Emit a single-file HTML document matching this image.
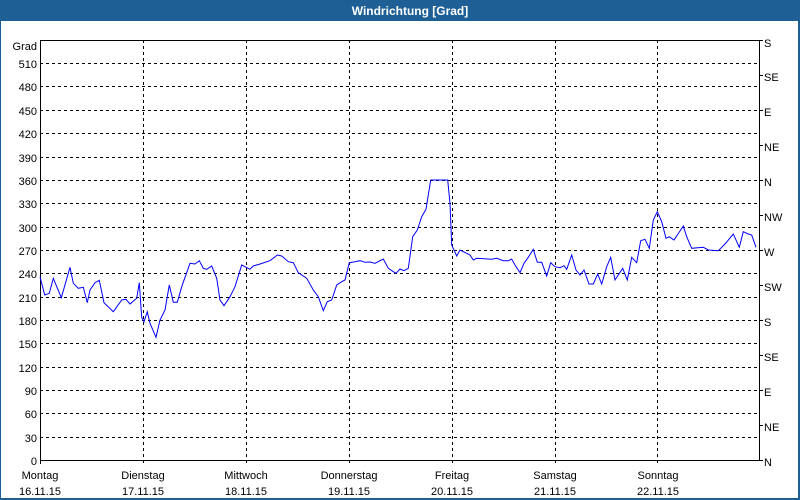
<!DOCTYPE html>
<html><head><meta charset="utf-8"><style>
html,body{margin:0;padding:0;width:800px;height:500px;overflow:hidden;background:#fff}
svg{display:block}
text{font-family:"Liberation Sans",sans-serif;font-size:11px;fill:#000}
</style></head><body>
<svg width="800" height="500" viewBox="0 0 800 500">
<rect x="0" y="0" width="800" height="500" fill="#1e6096"/>
<rect x="1" y="21" width="797" height="477" fill="#fff"/>
<text x="410" y="15" text-anchor="middle" style="font-weight:bold;fill:#fff;font-size:12px">Windrichtung [Grad]</text>
<g stroke="#000" stroke-width="1" stroke-dasharray="3,3" shape-rendering="crispEdges">
<line x1="40" x2="760" y1="63.5" y2="63.5"/><line x1="40" x2="760" y1="86.5" y2="86.5"/>
<line x1="40" x2="760" y1="110.5" y2="110.5"/><line x1="40" x2="760" y1="133.5" y2="133.5"/>
<line x1="40" x2="760" y1="157.5" y2="157.5"/><line x1="40" x2="760" y1="180.5" y2="180.5"/>
<line x1="40" x2="760" y1="203.5" y2="203.5"/><line x1="40" x2="760" y1="227.5" y2="227.5"/>
<line x1="40" x2="760" y1="250.5" y2="250.5"/><line x1="40" x2="760" y1="273.5" y2="273.5"/>
<line x1="40" x2="760" y1="297.5" y2="297.5"/><line x1="40" x2="760" y1="320.5" y2="320.5"/>
<line x1="40" x2="760" y1="343.5" y2="343.5"/><line x1="40" x2="760" y1="367.5" y2="367.5"/>
<line x1="40" x2="760" y1="390.5" y2="390.5"/><line x1="40" x2="760" y1="413.5" y2="413.5"/>
<line x1="40" x2="760" y1="437.5" y2="437.5"/>
<line x1="143.5" x2="143.5" y1="40" y2="464"/><line x1="246.5" x2="246.5" y1="40" y2="464"/>
<line x1="349.5" x2="349.5" y1="40" y2="464"/><line x1="452.5" x2="452.5" y1="40" y2="464"/>
<line x1="555.5" x2="555.5" y1="40" y2="464"/><line x1="657.5" x2="657.5" y1="40" y2="464"/>
</g>
<rect x="40.5" y="40.5" width="719" height="420" fill="none" stroke="#000" shape-rendering="crispEdges"/>
<g stroke="#000" shape-rendering="crispEdges">
<line x1="40.5" x2="40.5" y1="460" y2="464"/>
<line x1="760" x2="763" y1="40.5" y2="40.5"/><line x1="760" x2="763" y1="75.5" y2="75.5"/><line x1="760" x2="763" y1="110.5" y2="110.5"/><line x1="760" x2="763" y1="145.5" y2="145.5"/><line x1="760" x2="763" y1="180.5" y2="180.5"/><line x1="760" x2="763" y1="215.5" y2="215.5"/><line x1="760" x2="763" y1="250.5" y2="250.5"/><line x1="760" x2="763" y1="285.5" y2="285.5"/><line x1="760" x2="763" y1="320.5" y2="320.5"/><line x1="760" x2="763" y1="355.5" y2="355.5"/><line x1="760" x2="763" y1="390.5" y2="390.5"/><line x1="760" x2="763" y1="425.5" y2="425.5"/><line x1="760" x2="763" y1="460.5" y2="460.5"/>
</g>
<g text-anchor="end">
<text x="37" y="50">Grad</text>
<text x="37" y="68">510</text><text x="37" y="91">480</text><text x="37" y="115">450</text><text x="37" y="138">420</text>
<text x="37" y="162">390</text><text x="37" y="185">360</text><text x="37" y="208">330</text><text x="37" y="232">300</text>
<text x="37" y="255">270</text><text x="37" y="278">240</text><text x="37" y="302">210</text><text x="37" y="325">180</text>
<text x="37" y="348">150</text><text x="37" y="372">120</text><text x="37" y="395">90</text><text x="37" y="418">60</text>
<text x="37" y="442">30</text><text x="37" y="465">0</text>
</g>
<g>
<text x="764" y="47">S</text><text x="764" y="81">SE</text><text x="764" y="116">E</text><text x="764" y="151">NE</text>
<text x="764" y="186">N</text><text x="764" y="221">NW</text><text x="764" y="256">W</text><text x="764" y="291">SW</text>
<text x="764" y="326">S</text><text x="764" y="361">SE</text><text x="764" y="396">E</text><text x="764" y="431">NE</text>
<text x="764" y="466">N</text>
</g>
<g text-anchor="middle">
<text x="40" y="479">Montag</text><text x="40" y="495">16.11.15</text>
<text x="143" y="479">Dienstag</text><text x="143" y="495">17.11.15</text>
<text x="246" y="479">Mittwoch</text><text x="246" y="495">18.11.15</text>
<text x="349" y="479">Donnerstag</text><text x="349" y="495">19.11.15</text>
<text x="452" y="479">Freitag</text><text x="452" y="495">20.11.15</text>
<text x="555" y="479">Samstag</text><text x="555" y="495">21.11.15</text>
<text x="658" y="479">Sonntag</text><text x="658" y="495">22.11.15</text>
</g>
<polyline fill="none" stroke="#0000ff" stroke-width="1" points="40,276.7 44.7,295 49.3,293.3 53.3,278.3 61.3,297.7 70,267.3 73.3,283.3 78.3,288.3 83.3,287.3 87.3,302.7 90,290 95,282.7 99.3,280.3 104,302.7 113.3,311.7 121.7,300 126,299.3 130,304 136.7,298.3 139.3,282.7 141.7,317.3 144,321.7 147.3,311.7 150,323.3 156,337.3 160,320 165,310 169.3,285 173.3,302.3 177.3,302.3 181.7,286.7 190,263.3 195,264 199.3,260.7 203.3,268.3 206.7,269.3 211.7,266 216.7,278.3 220,300 224,305.7 230,296.7 235,286.7 241.7,265 250,269.3 253.3,266 260,264 270,260.7 277.3,255 281.7,256 288.3,261.7 293.3,262.7 298.3,272.7 306.7,278.3 313.3,290 318.3,296.7 323.3,310.7 327.3,301.7 331.7,300 336.7,285 341.7,281.7 345,280 349.3,262.7 355,261.7 360,260.7 365,262.3 370,262 375,263.3 383.3,259 388.3,268.3 393.3,271.7 396,273.3 400,269 404,270.7 408.3,268.3 412.7,236.7 417.3,230 421.7,216.7 426,209.3 430.7,180 447.7,180 450,203.3 451.7,245 456.7,256 460,250 466.7,253.3 470,255 473.3,260 476.7,258.3 491.7,259.3 496.7,258.3 503.3,260.7 508.3,260.7 511.7,259 515,265 520,272.7 524,263.3 528.3,257.3 533.3,249.3 537.3,262.3 541.7,262.3 546.7,276 550.7,262.7 555,266.7 560,267.7 564,265.7 566.7,269.3 571.7,255 576,270 580,275 584,270 589,284 593.3,284 597.7,274 601.7,284 606.7,266.7 610.7,257.3 615,280 622.7,268.3 627.3,280 631.7,257.3 636.7,262.7 640.7,240.7 645,239.3 649.3,248.3 653.3,220 657.3,211.7 661.7,221.7 666,238.3 669.3,236.7 674,240 683.3,226 686.7,236.7 691.7,248.3 703.3,247.3 708.3,250 718.3,250.7 725,244 733.3,234 739.3,247.3 743.3,231.7 748.3,234 751.7,235 756,247.3"/>
</svg>
</body></html>
